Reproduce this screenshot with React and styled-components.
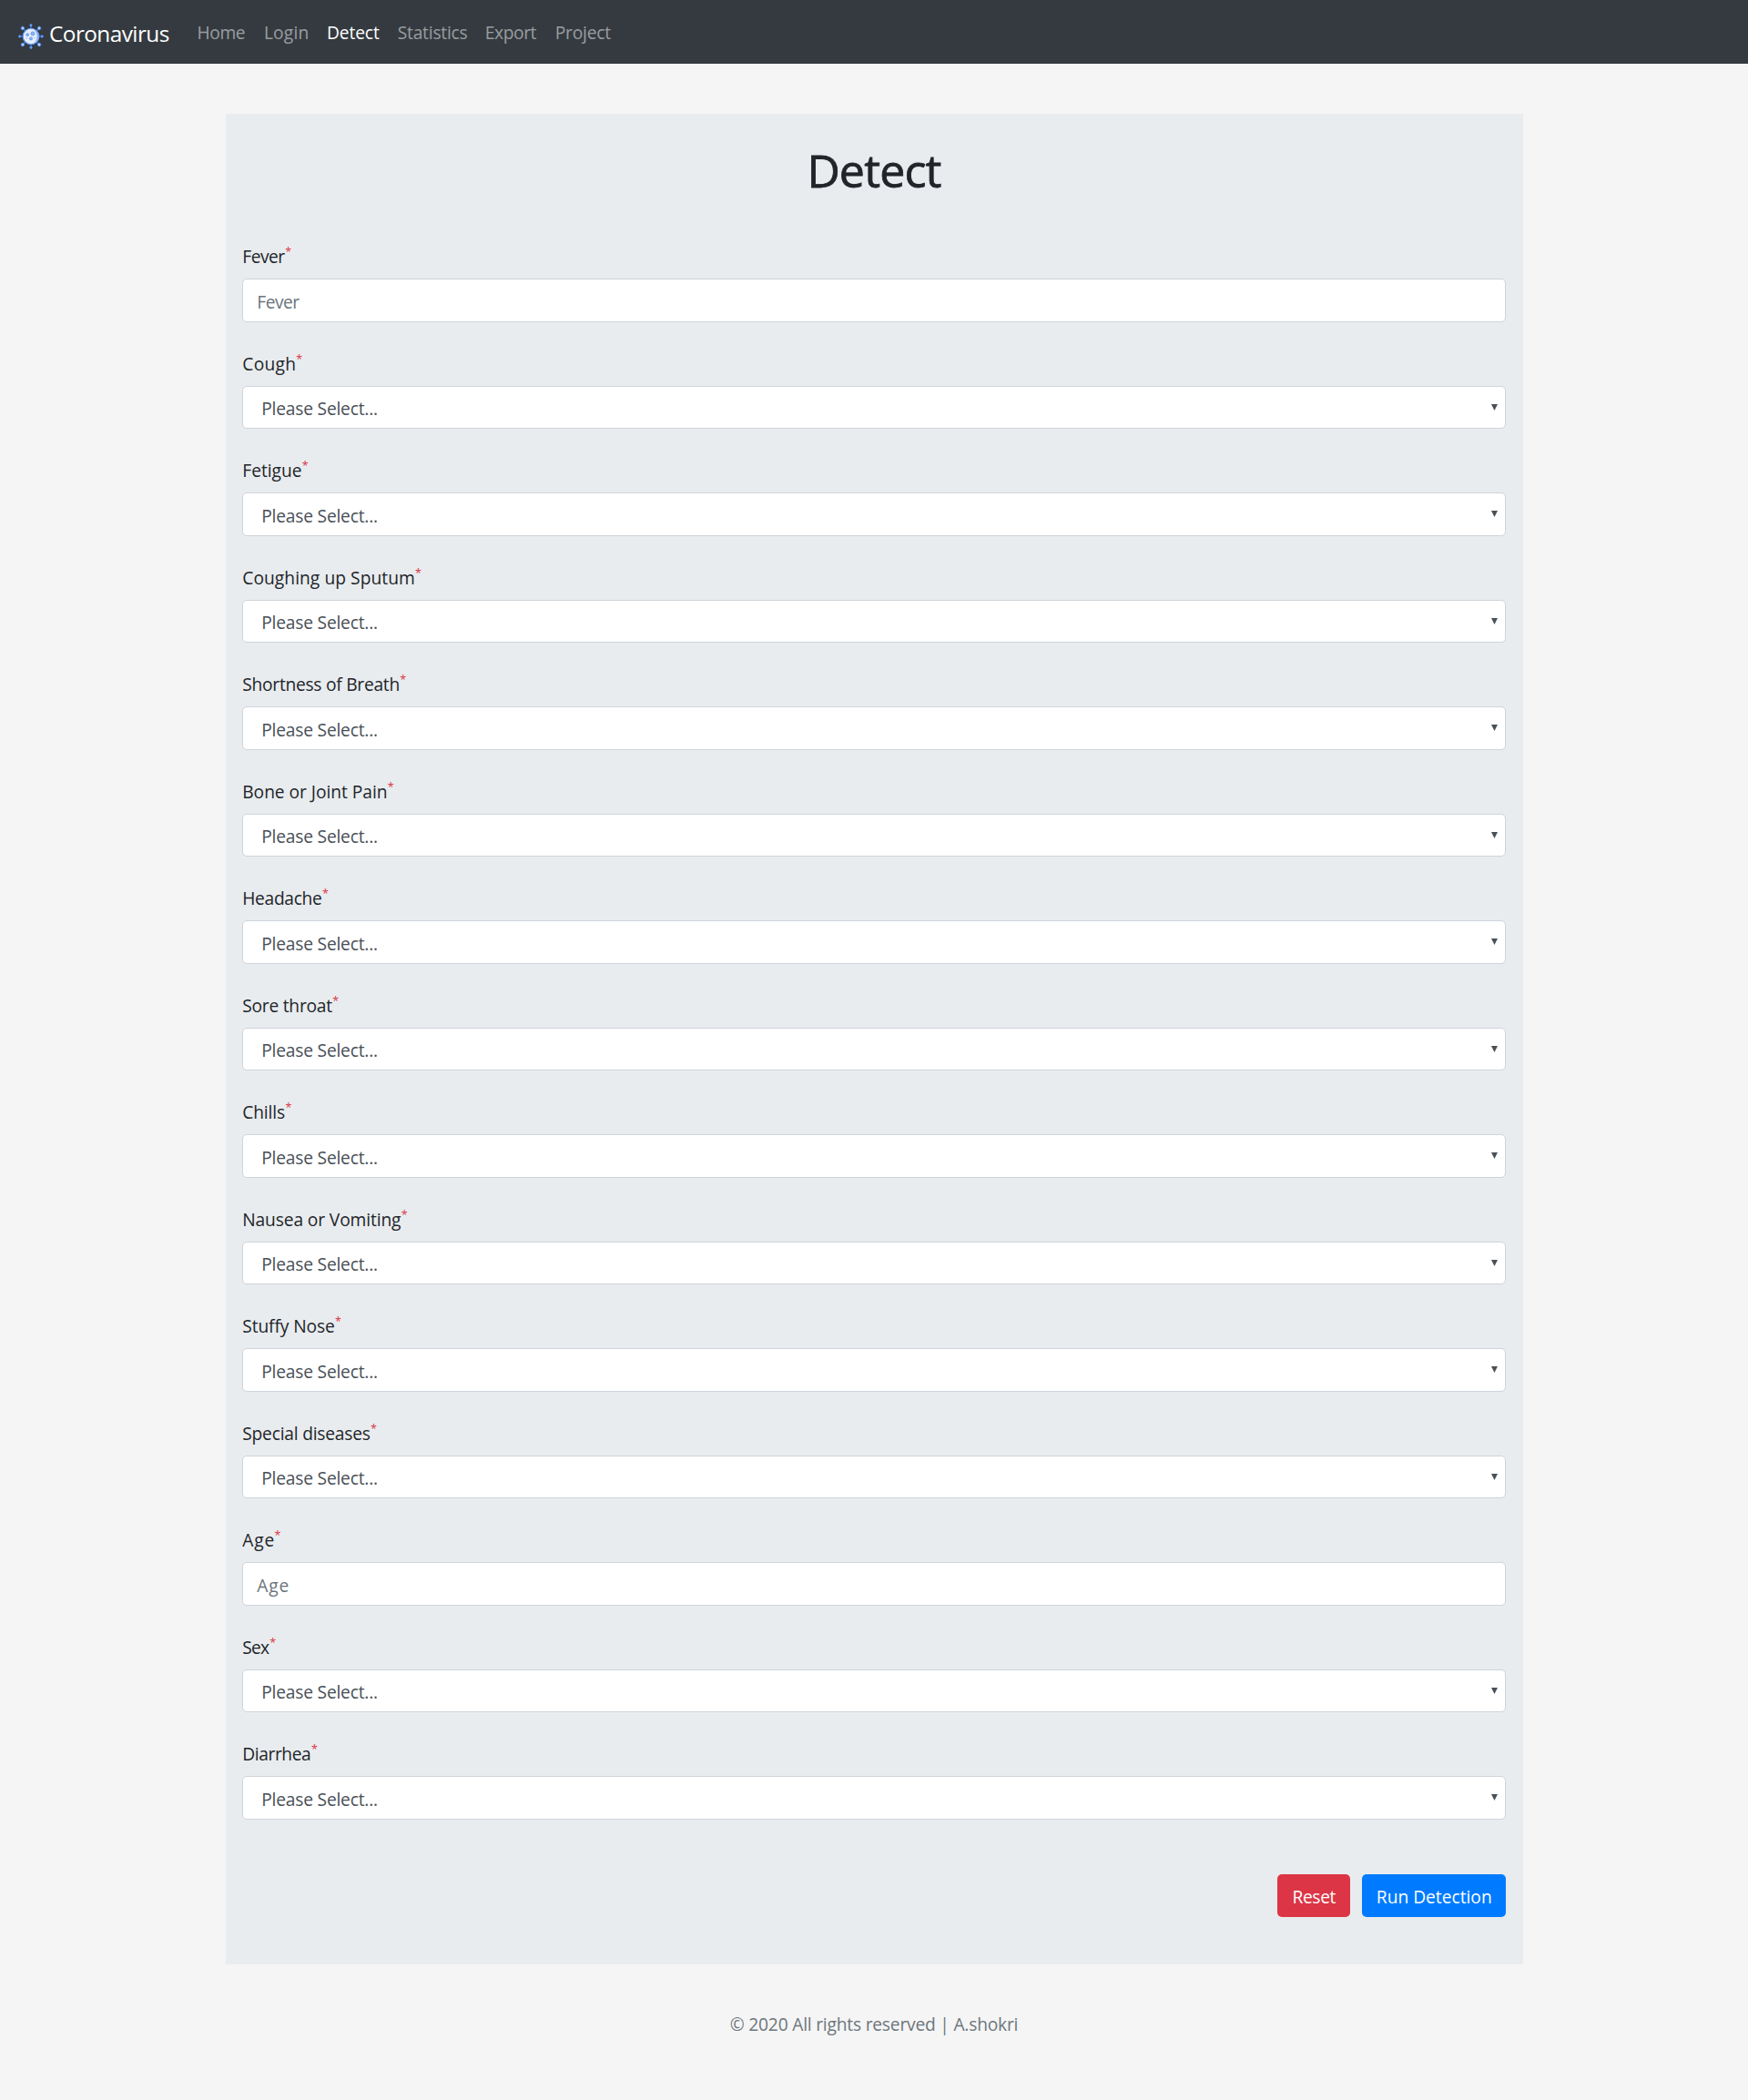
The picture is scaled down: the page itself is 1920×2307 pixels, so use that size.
import React from "react";
import styled, { createGlobalStyle } from "styled-components";

const GlobalStyle = createGlobalStyle`
  *, *::before, *::after { box-sizing: border-box; }
  body {
    margin: 0;
    background: #f5f5f5;
    color: #212529;
    font-family: "Open Sans", "Segoe UI", sans-serif;
    font-size: 19.2px;
    line-height: 30px;
  }
`;

const Page = styled.div`
  display: flex;
  flex-direction: column;
  align-items: center;
  min-height: 2307px;
`;

const Navbar = styled.nav`
  display: flex;
  align-items: center;
  align-self: stretch;
  height: 70px;
  padding-left: 18.5px;
  background: #343a40;
`;

const Brand = styled.a`
  display: flex;
  align-items: center;
  gap: 5.5px;
  width: 198px;
  color: #fff;
`;

const BrandIcon = styled.svg`
  flex: none;
  width: 30px;
  height: 30px;
  margin-top: 9px;
`;

const BrandName = styled.span`
  padding-top: 3px;
  font-size: 24.4px;
  line-height: 37.5px;
  letter-spacing: -0.58px;
`;

const NavList = styled.ul`
  display: flex;
  margin: 0;
  padding: 2px 0 0;
  list-style: none;
`;

const NavItem = styled.li`
  width: ${(p) => p.$width}px;
  color: ${(p) => (p.$active ? "#fff" : "rgba(255, 255, 255, 0.5)")};
  letter-spacing: ${(p) => p.$tracking}px;
  white-space: nowrap;
`;

const Card = styled.main`
  width: 1425px;
  height: 2033px;
  margin-top: 55px;
  padding: 31.6px 18.75px 0;
  background: #e9ecef;
`;

const Title = styled.h1`
  margin: 0 0 49.65px;
  font-size: 50px;
  font-weight: 500;
  line-height: 60px;
  letter-spacing: -0.8px;
  text-align: center;
  -webkit-text-stroke: 0.8px #212529;
`;

const Form = styled.form`
  display: flex;
  flex-direction: column;
  gap: 30px;
`;

const Field = styled.div`
  display: flex;
  flex-direction: column;
`;

const Label = styled.label`
  display: flex;
  height: 40px;
  padding-top: 0.8px;
`;

const LabelText = styled.span`
  letter-spacing: ${(p) => p.$tracking}px;
`;

const Required = styled.span`
  margin-left: ${(p) => 0.2 - p.$tracking}px;
  color: #dc3545;
  font-size: 12.5px;
  line-height: 19px;
`;

const Input = styled.input`
  width: 100%;
  height: 47.5px;
  padding: 9.5px 15px 5.5px 15px;
  border: 1px solid #ced4da;
  border-radius: 5px;
  background: #fff;
  color: #495057;
  font: inherit;
  letter-spacing: ${(p) => p.$tracking}px;
  &::placeholder { color: #6c757d; opacity: 1; }
`;

const Select = styled.div`
  display: flex;
  align-items: center;
  justify-content: space-between;
  height: 47.5px;
  padding: 0 7.75px 0 20px;
  border: 1px solid #ced4da;
  border-radius: 5px;
  background: #fff;
  color: #495057;
`;

const SelectValue = styled.span`
  padding-top: 3.5px;
  letter-spacing: -0.2px;
`;

const Arrow = styled.svg`
  width: 7px;
  height: 7px;
  fill: #495057;
`;

const Actions = styled.div`
  display: flex;
  justify-content: flex-end;
  gap: 13px;
  margin-top: 30px;
`;

const Button = styled.button`
  width: ${(p) => p.$width}px;
  height: 47.5px;
  padding: 3.6px 0 0 1px;
  border: 0;
  border-radius: 5px;
  background: ${(p) => p.$color};
  color: #fff;
  font: inherit;
  letter-spacing: ${(p) => p.$tracking}px;
`;

const Footer = styled.footer`
  margin-top: 51px;
  color: #6c757d;
  letter-spacing: -0.2px;
`;

const links = [
  { name: "Home", width: 73.4, tracking: -0.37 },
  { name: "Login", width: 69, tracking: 0.2 },
  { name: "Detect", width: 77.8, tracking: -0.1, active: true },
  { name: "Statistics", width: 96, tracking: -0.2 },
  { name: "Export", width: 77, tracking: -0.38 },
  { name: "Project", width: 70, tracking: -0.2 },
];

const fields = [
  { label: "Fever", tracking: -0.5, type: "text" },
  { label: "Cough", tracking: 0.3 },
  { label: "Fetigue", tracking: 0 },
  { label: "Coughing up Sputum", tracking: 0.06 },
  { label: "Shortness of Breath", tracking: -0.26 },
  { label: "Bone or Joint Pain", tracking: -0.03 },
  { label: "Headache", tracking: -0.31 },
  { label: "Sore throat", tracking: -0.23 },
  { label: "Chills", tracking: -0.12 },
  { label: "Nausea or Vomiting", tracking: -0.12 },
  { label: "Stuffy Nose", tracking: -0.1 },
  { label: "Special diseases", tracking: -0.21 },
  { label: "Age", tracking: 0.9, type: "text" },
  { label: "Sex", tracking: -0.8 },
  { label: "Diarrhea", tracking: -0.41 },
];

const spikes = [0, 45, 90, 135, 180, 225, 270, 315];

function VirusIcon() {
  return (
    <BrandIcon viewBox="0 0 30 30" aria-hidden="true">
      {spikes.map((angle) => {
        const diagonal = angle % 90 !== 0;
        return (
          <g key={angle} transform={`rotate(${angle} 15 15)`}>
            <path d="M15 7V3" stroke="#4a86f0" strokeWidth="1.1" />
            <circle
              cx="15"
              cy={diagonal ? 2.2 : 2.8}
              r={diagonal ? 1.8 : 1.2}
              fill={diagonal ? "#b4cffd" : "#8ab4ff"}
              stroke="#4a86f0"
              strokeWidth="0.8"
            />
          </g>
        );
      })}
      <circle cx="15" cy="15" r="8.8" fill="#e6edfb" stroke="#5a96f8" strokeWidth="1.1" />
      <path d="M18 7.2a8.2 8.2 0 0 1 0 15.6a10.5 10.5 0 0 0 0-15.6z" fill="#8fb5f7" />
      <circle cx="11.2" cy="13.2" r="1.4" fill="#8fb5f7" stroke="#5a90ec" strokeWidth="0.8" />
      <circle cx="17" cy="11.9" r="2" fill="#8fb5f7" stroke="#5a90ec" strokeWidth="0.8" />
      <circle cx="15" cy="17.4" r="1.5" fill="#8fb5f7" stroke="#5a90ec" strokeWidth="0.8" />
      <circle cx="10.2" cy="17" r="0.5" fill="#5a90ec" />
      <circle cx="18.8" cy="16.5" r="0.5" fill="#5a90ec" />
    </BrandIcon>
  );
}

function FormField({ label, tracking, type }) {
  return (
    <Field>
      <Label>
        <LabelText $tracking={tracking}>{label}</LabelText>
        <Required $tracking={tracking}>*</Required>
      </Label>
      {type ? (
        <Input type={type} placeholder={label} $tracking={tracking} />
      ) : (
        <Select role="combobox" tabIndex={0}>
          <SelectValue>Please Select...</SelectValue>
          <Arrow viewBox="0 0 7 7">
            <path d="M0 0H7L3.5 7Z" />
          </Arrow>
        </Select>
      )}
    </Field>
  );
}

export default function App() {
  return (
    <>
      <GlobalStyle />
      <Page>
        <Navbar>
          <Brand>
            <VirusIcon />
            <BrandName>Coronavirus</BrandName>
          </Brand>
          <NavList>
            {links.map((l) => (
              <NavItem key={l.name} $width={l.width} $tracking={l.tracking} $active={l.active}>
                {l.name}
              </NavItem>
            ))}
          </NavList>
        </Navbar>
        <Card>
          <Title>Detect</Title>
          <Form>
            {fields.map((f) => (
              <FormField key={f.label} {...f} />
            ))}
            <Actions>
              <Button type="reset" $width={80} $color="#dc3545" $tracking={-0.33}>
                Reset
              </Button>
              <Button type="button" $width={158} $color="#007bff" $tracking={0}>
                Run Detection
              </Button>
            </Actions>
          </Form>
        </Card>
        <Footer>© 2020 All rights reserved | A.shokri</Footer>
      </Page>
    </>
  );
}
